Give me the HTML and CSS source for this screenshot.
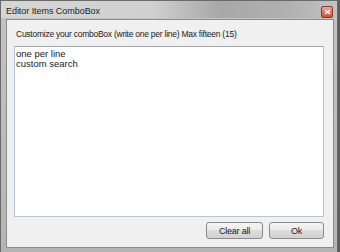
FILE: index.html
```html
<!DOCTYPE html>
<html>
<head>
<meta charset="utf-8">
<link rel="stylesheet" href="styles.css">
</head>
<body>
<div class="window">
  <div class="titlebar">
    <span class="title">Editor Items ComboBox</span>
    <span class="close"><svg width="7" height="6" viewBox="0 0 7 6"><path d="M1 1 L6 5 M6 1 L1 5" stroke="#fff" stroke-width="1.4"/></svg></span>
  </div>
  <div class="client">
    <div class="label">Customize your comboBox (write one per line) Max fifteen (15)</div>
    <div class="textbox">
      <div class="line">one per line</div>
      <div class="line">custom search</div>
    </div>
    <div class="buttons">
      <span class="btn btn-clear">Clear all</span>
      <span class="btn btn-ok">Ok</span>
    </div>
  </div>
</div>
</body>
</html>
```
FILE: styles.css
```css
html, body {
  margin: 0;
  padding: 0;
}
body {
  width: 340px;
  height: 252px;
  overflow: hidden;
  background: #5c5c5c;
  font-family: "Liberation Sans", Arial, sans-serif;
}
.window {
  box-sizing: border-box;
  width: 338px;
  height: 252px;
  background: linear-gradient(to bottom, #c4c4c4, #b4b4b4);
  border: 1px solid #6a6a6a;
  border-bottom: none;
  display: flex;
  flex-direction: column;
}
.titlebar {
  height: 17px;
  display: flex;
  align-items: center;
  justify-content: space-between;
  padding: 0 4px 0 5px;
  background: linear-gradient(to right, #d6d6d6 0%, #d0d0d0 45%, #a8a8a8 65%, #b0b0b0 85%, #c2c2c2 100%);
}
.title {
  font-size: 9px;
  color: #1e1e1e;
  padding-top: 2px;
  letter-spacing: -0.05px;
}
.close {
  width: 10px;
  height: 10px;
  margin-top: 5px;
  background: linear-gradient(to bottom, #eaa595, #c8503a);
  border: 1px solid #8a3a2c;
  border-radius: 2px;
  display: flex;
  align-items: center;
  justify-content: center;
}
.client {
  flex: 1;
  margin: 1px 3px 4px 5px;
  background: #f0f0f0;
  border: 1px solid #8c8c8c;
  display: flex;
  flex-direction: column;
  padding: 0 9px 0 7px;
}
.label {
  font-size: 8.5px;
  letter-spacing: -0.25px;
  color: #222;
  margin: 9px 0 0 2px;
  height: 11px;
}
.textbox {
  height: 165px;
  margin-top: 6px;
  background: #fff;
  border: 1px solid #b5c6d6;
  border-top-color: #9ba8b6;
  padding: 2px 1px;
}
.line {
  font-size: 9.5px;
  line-height: 9.5px;
  color: #222;
}
.buttons {
  display: flex;
  justify-content: flex-end;
  gap: 6px;
  margin-top: 5px;
}
.btn {
  box-sizing: border-box;
  height: 17px;
  border: 1px solid #8a8a8a;
  border-radius: 3px;
  background: linear-gradient(to bottom, #f4f4f4 0%, #ececec 45%, #dcdcdc 50%, #d2d2d2 100%);
  font-size: 9px;
  letter-spacing: -0.2px;
  color: #222;
  display: flex;
  align-items: center;
  justify-content: center;
}
.btn-clear { width: 57px; }
.btn-ok { width: 55px; }
```
